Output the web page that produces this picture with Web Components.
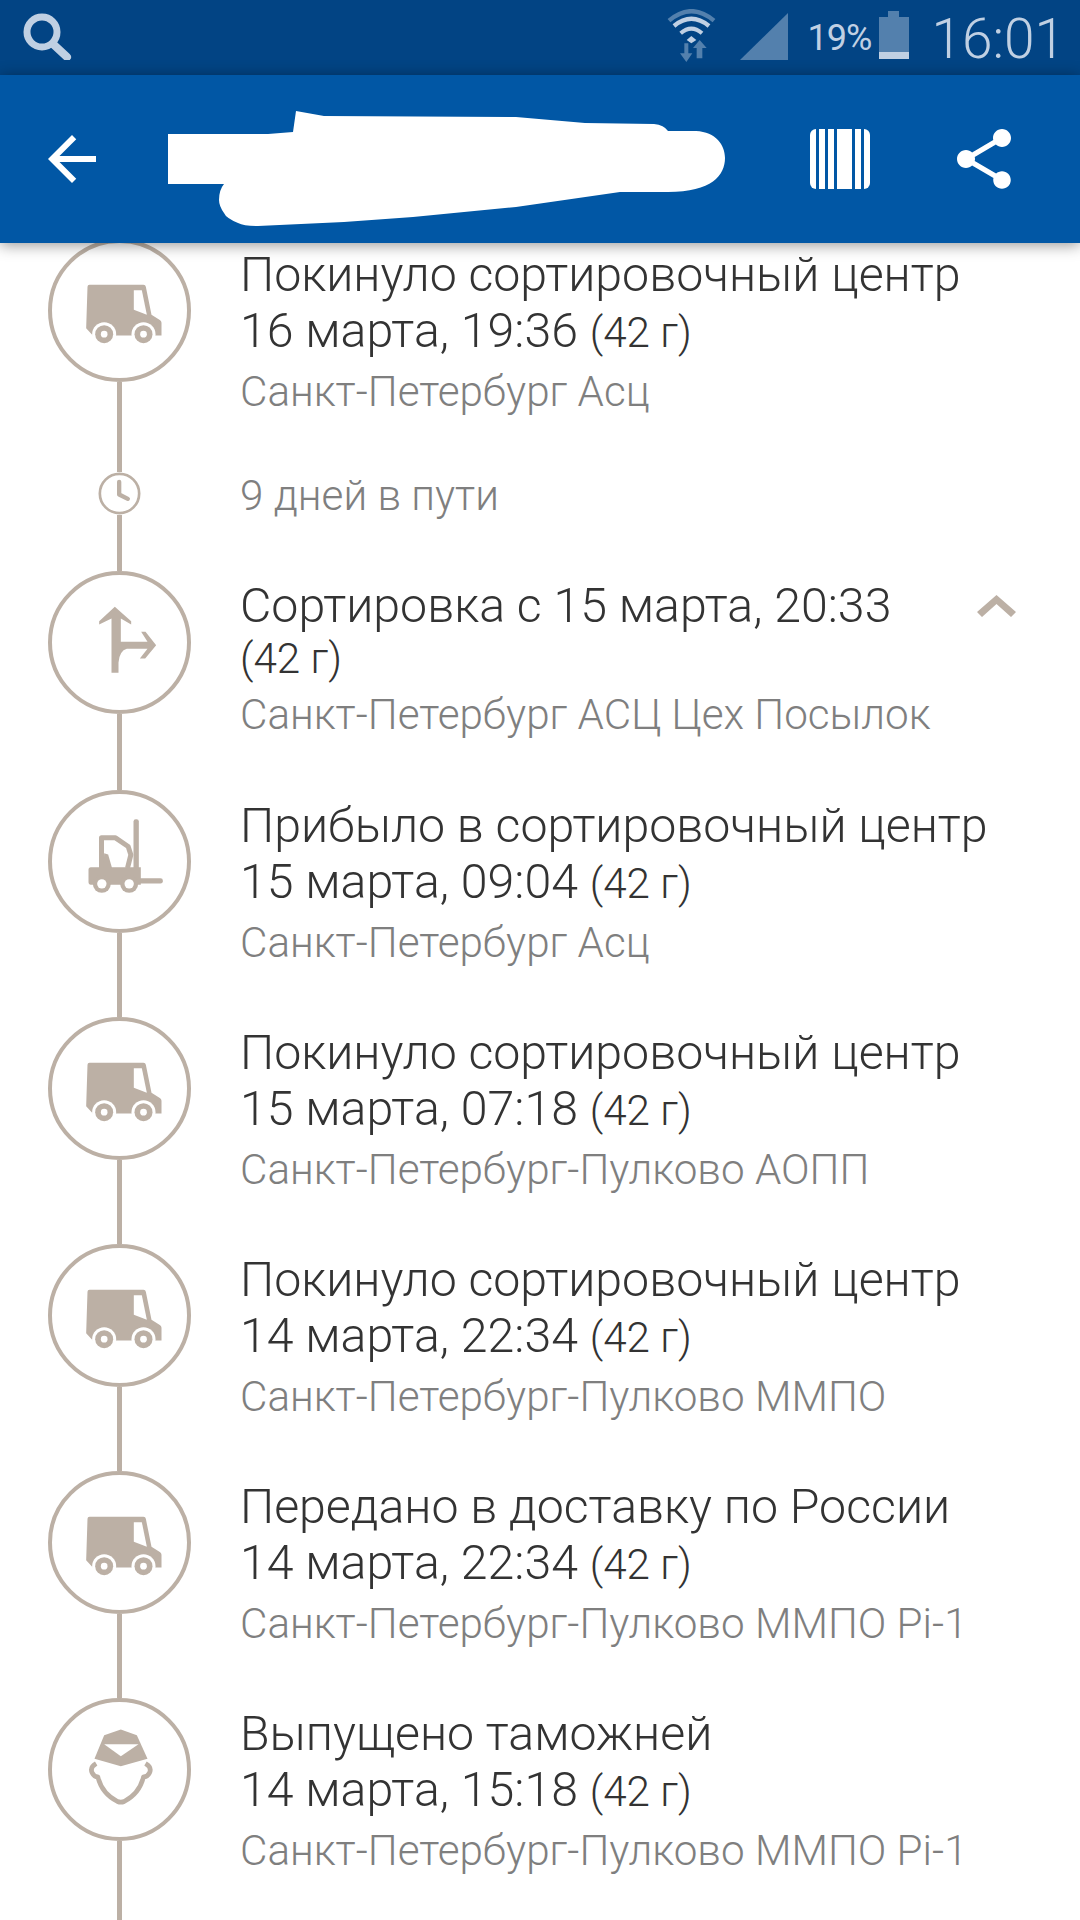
<!DOCTYPE html>
<html lang="ru">
<head>
<meta charset="utf-8">
<title>Отслеживание</title>
<style>
  html, body { margin: 0; height: 1920px; overflow: hidden; background: #fff; }
  body { font-family: Roboto, "Noto Sans", sans-serif; font-weight: 300; display: flex; flex-direction: column; }
</style>
</head>
<body>
<status-bar></status-bar>
<app-bar></app-bar>
<track-list>
  <track-row icon="truck" height="233">
    <span slot="title">Покинуло сортировочный центр</span>
    <span slot="date">16 марта, 19:36</span>
    <span slot="place">Санкт-Петербург Асц</span>
  </track-row>
  <track-note>9 дней в пути</track-note>
  <track-row icon="fork" height="219" wrapped open style="--text-top: 7px">
    <span slot="title">Сортировка с 15 марта, 20:33</span>
    <span slot="place">Санкт-Петербург АСЦ Цех Посылок</span>
  </track-row>
  <track-row icon="lift">
    <span slot="title">Прибыло в сортировочный центр</span>
    <span slot="date">15 марта, 09:04</span>
    <span slot="place">Санкт-Петербург Асц</span>
  </track-row>
  <track-row icon="truck">
    <span slot="title">Покинуло сортировочный центр</span>
    <span slot="date">15 марта, 07:18</span>
    <span slot="place">Санкт-Петербург-Пулково АОПП</span>
  </track-row>
  <track-row icon="truck">
    <span slot="title">Покинуло сортировочный центр</span>
    <span slot="date">14 марта, 22:34</span>
    <span slot="place">Санкт-Петербург-Пулково ММПО</span>
  </track-row>
  <track-row icon="truck">
    <span slot="title">Передано в доставку по России</span>
    <span slot="date">14 марта, 22:34</span>
    <span slot="place">Санкт-Петербург-Пулково ММПО Pi-1</span>
  </track-row>
  <track-row icon="officer">
    <span slot="title">Выпущено таможней</span>
    <span slot="date">14 марта, 15:18</span>
    <span slot="place">Санкт-Петербург-Пулково ММПО Pi-1</span>
  </track-row>
</track-list>

<script>
(function () {
  const createTemplate = (html) => {
    const template = document.createElement('template');
    template.innerHTML = html;
    return template;
  };

  const TAN = '#bcb0a5';

  // drawn in zoomed reference units, a circle is 429 wide
  const icons = {
    truck: { box: '53.5 30.5 429 429', draw: `
      <path fill="${TAN}" d="M172 174 Q172 168 178 168 H340 Q346 168 347 174 L364 258 L390 274 Q394 277 394 282 V320 H188 L168 298 Z"/>
      <path fill="#fff" d="M311 184 H335 L350 258 L311 243 Z"/>
      <circle cx="222" cy="316" r="36" fill="#fff"/><circle cx="340" cy="316" r="36" fill="#fff"/>
      <circle cx="222" cy="316" r="27" fill="${TAN}"/><circle cx="340" cy="316" r="27" fill="${TAN}"/>
      <circle cx="222" cy="316" r="10" fill="#fff"/><circle cx="340" cy="316" r="10" fill="#fff"/>` },
    fork: { box: '53.5 35.5 429 429', draw: `
      <path fill="${TAN}" d="M254 143 L303 186 V196 L272 178 V248 H352 L333 218 H346 L378 258 L345 298 H329 L352 269 H290 Q268 275 265 310 V341 H244 V178 L207 196 V186 Z"/>` },
    lift: { box: '53.5 690.5 429 429', draw: `
      <rect x="310" y="778" width="16" height="180" rx="7" fill="${TAN}"/>
      <rect x="320" y="955" width="78" height="16" rx="7" fill="${TAN}"/>
      <path fill="none" stroke="${TAN}" stroke-width="15" stroke-linejoin="round" d="M214 925 V834 H256 L294 860 L302 885 L292 925"/>
      <path fill="${TAN}" d="M222 880 L234 884 L246 926 H220 Z"/>
      <path fill="${TAN}" d="M182 922 H332 V975 H182 Q175 975 175 966 V930 Q175 922 182 922 Z"/>
      <circle cx="215" cy="972" r="27" fill="${TAN}"/><circle cx="297" cy="972" r="27" fill="${TAN}"/>
      <circle cx="215" cy="972" r="14" fill="#fff"/><circle cx="297" cy="972" r="14" fill="#fff"/>` },
    officer: { box: '53.5 53.5 429 429', draw: `
      <path fill="${TAN}" d="M272 148 L320 165 L352 236 L272 258 L193 236 L222 165 Z"/>
      <path fill="#fff" d="M222 192 L325 192 L272 228 Z"/>
      <path fill="none" stroke="${TAN}" stroke-width="14" stroke-linejoin="round" d="M198 250 Q178 262 186 278 Q192 290 203 290 Q215 340 262 364 Q272 368 282 364 Q328 340 340 290 Q352 290 358 278 Q366 262 346 250"/>` }
  };

  const statusTemplate = createTemplate(`
  <style>
  :host {
    display: flex;
    flex: none;
    height: 75px;
    align-items: flex-start;
    background: #024484;
    color: #c0d0e3;
    font-family: Roboto, sans-serif;
    font-weight: 300;
  }
  svg { display: block; flex: none; }
  .search { margin: 13px 0 0 22px; }
  .wifi { margin: 9px 0 0 auto; }
  .signal { margin: 13px 0 0 24px; }
  .percent { margin: 17px 0 0 20px; font-size: 36px; line-height: 42px; font-weight: 400; letter-spacing: -1px; }
  .battery { margin: 11px 0 0 8px; }
  .time { margin: 7px 15px 0 22px; font-size: 55px; line-height: 65px; }
  </style>
  <svg class="search" width="50" height="47" viewBox="0 0 50 47"><circle cx="20" cy="19" r="15" fill="none" stroke="#c0d0e3" stroke-width="7"/><path d="M31 31 L45 44" stroke="#c0d0e3" stroke-width="8" stroke-linecap="round"/></svg>
  <svg class="wifi" width="49" height="53" viewBox="85 27 147 159">
    <path d="M91 62 Q158 5 226 62" fill="none" stroke="#5380ad" stroke-width="13"/>
    <path d="M106 78 Q158 35 211 78" fill="none" stroke="#c0d0e3" stroke-width="13"/>
    <path d="M126 100 Q158 72 190 100" fill="none" stroke="#c0d0e3" stroke-width="12"/>
    <path d="M158 108 L173 120 L158 130 L144 120 Z" fill="#c0d0e3"/>
    <path d="M137 130 H149 V160 H161 L143 186 L124 160 H137 Z" fill="#5380ad"/>
    <path d="M174 175 H191 V144 H204 L183 120 L163 144 H174 Z" fill="#5380ad"/>
  </svg>
  <svg class="signal" width="48" height="47" viewBox="0 0 48 47"><path d="M48 0 V47 H0 Z" fill="#5380ad"/></svg>
  <span class="percent">19%</span>
  <svg class="battery" width="30" height="48" viewBox="0 0 30 48"><path d="M9 0 H20 V6 H30 V48 H0 V6 H9 Z" fill="#5380ad"/><rect y="41" width="30" height="7" fill="#c0d0e3"/></svg>
  <span class="time">16:01</span>
  `);

  class StatusBar extends HTMLElement {
    constructor() {
      super();
      this.attachShadow({ mode: 'open' }).appendChild(statusTemplate.content.cloneNode(true));
    }
  }
  customElements.define('status-bar', StatusBar);

  const barTemplate = createTemplate(`
  <style>
  :host {
    display: flex;
    flex: none;
    position: relative;
    z-index: 2;
    height: 168px;
    align-items: flex-start;
    background: #0157a5;
    box-shadow: 0 2px 14px rgba(0, 0, 0, .42);
  }
  svg { display: block; flex: none; }
  .back { margin: 48px 0 0 36px; }
  .blob { margin: 36px 0 0 60px; }
  .code { margin: 54px 0 0 85px; }
  .share { margin: 48px 0 0 78px; }
  </style>
  <svg class="back" width="72" height="72" viewBox="0 0 24 24" fill="#fff"><path d="M20 11H7.83l5.59-5.59L12 4l-8 8 8 8 1.41-1.41L7.83 13H20v-2z"/></svg>
  <svg class="blob" width="557" height="115" viewBox="168 111 557 115" fill="#fff"><path d="M168 134 H268 L293 132 L296 111 L324 116 L516 117 L585 123 L654 124 Q664 125 668 131 H696 C716 132 725 145 725 158 C725 175 712 192 668 192 H620 L516 207 L413 217 L344 222 L258 226 Q244 226 238 223 Q226 218 224 213 Q219 206 219 200 Q219 190 224 184 H168 Z"/></svg>
  <svg class="code" width="60" height="60" viewBox="0 0 60 60">
    <rect width="60" height="60" rx="6" fill="#fff"/>
    <g fill="#0157a5"><rect x="6" width="3" height="60"/><rect x="15" width="3" height="60"/><rect x="24" width="3" height="60"/><rect x="42" width="3" height="60"/><rect x="51" width="3" height="60"/></g>
  </svg>
  <svg class="share" width="72" height="72" viewBox="0 0 24 24" fill="#fff"><path d="M18 16.08c-.76 0-1.44.3-1.96.77L8.91 12.7c.05-.23.09-.46.09-.7s-.04-.47-.09-.7l7.05-4.11c.54.5 1.25.81 2.04.81 1.66 0 3-1.34 3-3s-1.34-3-3-3-3 1.34-3 3c0 .24.04.47.09.7L8.04 9.81C7.5 9.31 6.79 9 6 9c-1.66 0-3 1.34-3 3s1.34 3 3 3c.79 0 1.5-.31 2.04-.81l7.12 4.16c-.05.21-.08.43-.08.65 0 1.61 1.31 2.92 2.92 2.92 1.61 0 2.92-1.31 2.92-2.92s-1.31-2.92-2.92-2.92z"/></svg>
  `);

  class AppBar extends HTMLElement {
    constructor() {
      super();
      this.attachShadow({ mode: 'open' }).appendChild(barTemplate.content.cloneNode(true));
    }
  }
  customElements.define('app-bar', AppBar);

  const listTemplate = createTemplate(`
  <style>
  :host { display: block; flex: 1; min-height: 0; overflow: hidden; }
  .scroll { margin-top: -4px; display: flex; flex-direction: column; }
  </style>
  <div class="scroll"><slot></slot></div>
  `);

  class TrackList extends HTMLElement {
    constructor() {
      super();
      this.attachShadow({ mode: 'open' }).appendChild(listTemplate.content.cloneNode(true));
    }
  }
  customElements.define('track-list', TrackList);

  const rowTemplate = createTemplate(`
  <style>
  :host {
    display: flex;
    align-items: stretch;
    position: relative;
    padding-left: 48px;
    box-sizing: border-box;
  }
  .rail { flex: none; width: 143px; display: flex; flex-direction: column; align-items: center; }
  .circle { flex: none; width: 143px; height: 143px; box-sizing: border-box; border: 4px solid ${TAN}; border-radius: 50%; background: #fff; }
  .circle svg { display: block; margin: -4px; width: 143px; height: 143px; }
  .line { flex: 1; width: 5px; background: ${TAN}; }
  .text { flex: 1; margin: var(--text-top, 8px) 0 0 49px; min-width: 0; }
  .head { font-size: 48.25px; line-height: 56px; color: #333; white-space: nowrap; }
  .weight { font-size: 42.2px; }
  :host([wrapped]) .weight { display: block; line-height: 49px; }
  .place { font-size: 42.2px; line-height: 62px; color: #7f7f7f; white-space: nowrap; }
  :host([wrapped]) .place { line-height: 64px; }
  .chevron { position: absolute; left: 977px; top: 24px; display: none; }
  :host([open]) .chevron { display: block; }
  </style>
  <div class="rail">
    <div class="circle"></div>
    <div class="line"></div>
  </div>
  <div class="text">
    <div class="head"><slot name="title"></slot></div>
    <div class="head"><slot name="date"></slot> <span class="weight">(42 г)</span></div>
    <div class="place"><slot name="place"></slot></div>
  </div>
  <svg class="chevron" width="39" height="22" viewBox="0 0 39 22"><path d="M19.500 0 L39 17 L34 22 L19.500 9 L5 22 L0 17 Z" fill="${TAN}"/></svg>
  `);

  class TrackRow extends HTMLElement {
    constructor() {
      super();
      const shadowRoot = this.attachShadow({ mode: 'open' });
      shadowRoot.appendChild(rowTemplate.content.cloneNode(true));
      this._circle = shadowRoot.querySelector('.circle');
    }

    connectedCallback() {
      const icon = icons[this.getAttribute('icon')];
      if (icon) {
        this._circle.innerHTML = `<svg viewBox="${icon.box}">${icon.draw}</svg>`;
      }
      this.style.height = (this.getAttribute('height') || 227) + 'px';
    }
  }
  customElements.define('track-row', TrackRow);

  const noteTemplate = createTemplate(`
  <style>
  :host { display: flex; align-items: stretch; height: 99px; padding-left: 48px; }
  .rail { flex: none; width: 143px; display: flex; flex-direction: column; align-items: center; }
  svg { display: block; flex: none; }
  .line { flex: 1; width: 5px; background: ${TAN}; }
  .text { margin-left: 49px; font-size: 42.2px; line-height: 48px; color: #7f7f7f; }
  </style>
  <div class="rail">
    <svg width="43" height="43" viewBox="206.500 728.500 129 129">
      <circle cx="271" cy="793" r="59" fill="#fff" stroke="${TAN}" stroke-width="8"/>
      <path d="M270 758 V796 L296 809" fill="none" stroke="${TAN}" stroke-width="13" stroke-linecap="round" stroke-linejoin="round"/>
    </svg>
    <div class="line"></div>
  </div>
  <div class="text"><slot></slot></div>
  `);

  class TrackNote extends HTMLElement {
    constructor() {
      super();
      this.attachShadow({ mode: 'open' }).appendChild(noteTemplate.content.cloneNode(true));
    }
  }
  customElements.define('track-note', TrackNote);
}());
</script>
</body>
</html>
